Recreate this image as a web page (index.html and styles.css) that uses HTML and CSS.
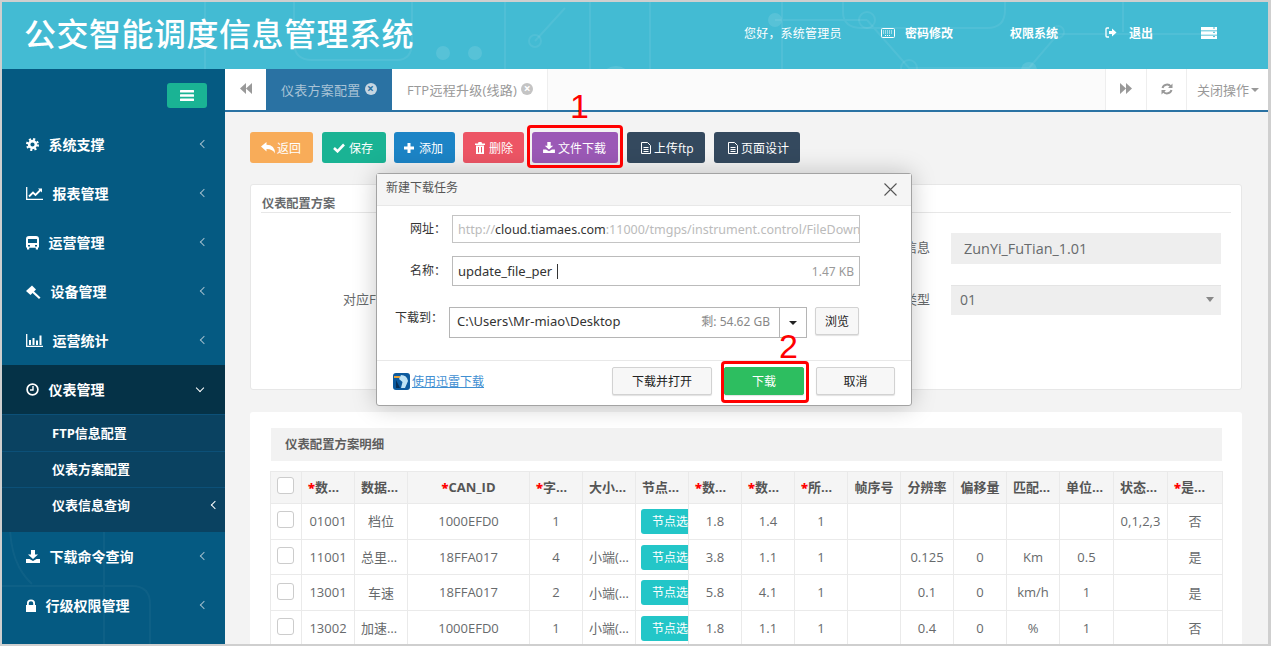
FILE: index.html
```html
<!DOCTYPE html>
<html lang="zh-CN">
<head>
    <meta charset="UTF-8" />
    <meta name="viewport" content="width=device-width, initial-scale=1.0" />
    <title>公交智能调度信息管理系统</title>
    <link rel="stylesheet" href="styles.css">
</head>
<body>
<div class="frame">
    <div class="header">
        <svg class="header-bg" width="1266" height="67" viewBox="0 0 1266 67" fill="none" stroke="#fff" stroke-opacity="0.07" stroke-width="2">
            <path d="M203 0V67M292 0V40Q292 58 310 58H395Q410 58 410 40V0M503 0V67M588 0V67M533 39L563 6M648 0V67M780 0V67M1121 0V30M773 18L865 18M841 0V10Q841 26 860 26H985Q1003 26 1003 8V0M865 18L907 66H1027L1056 32H1210"/>
            <circle cx="533" cy="39" r="6"/><circle cx="865" cy="18" r="8"/><circle cx="907" cy="66" r="8"/><circle cx="1056" cy="30" r="6"/>
            <g fill="#fff" fill-opacity="0.11" stroke="none">
                <circle cx="441" cy="51" r="7"/><circle cx="473" cy="51" r="7"/><circle cx="773" cy="18" r="7"/><circle cx="1027" cy="68" r="8"/><circle cx="614" cy="80" r="16"/>
            </g>
        </svg>
        <div class="logo">公交智能调度信息管理系统</div>
        <div class="header-links">
            <span class="hello">您好，系统管理员</span>
            <a class="hlink hlink-pwd"><svg width="14" height="10" viewBox="0 0 14 10" fill="none" stroke="#fff"><rect x="0.5" y="0.5" width="13" height="9" rx="1"/><path d="M2 3h10M2 5h10M4 7.5h6" stroke-dasharray="1 1"/></svg>密码修改</a>
            <a class="hlink hlink-auth">权限系统</a>
            <a class="hlink hlink-out"><svg width="12" height="11" viewBox="0 0 12 11" fill="#fff"><path d="M4 1H2Q1 1 1 2V9Q1 10 2 10H4" fill="none" stroke="#fff" stroke-width="1.3"/><path d="M4 4H7V1.5L11.5 5.5L7 9.5V7H4Z"/></svg>退出</a>
            <a class="hlink hlink-menu"><svg width="16" height="12" viewBox="0 0 16 12" fill="#fff"><rect width="16" height="3.4"/><rect y="4.3" width="16" height="3.4"/><rect y="8.6" width="16" height="3.4"/><path d="M12 1h2M12 5.3h2M12 9.6h2" stroke="#43bbd3"/></svg></a>
        </div>
    </div>

    <div class="body-wrap">
        <div class="sidebar">
            <svg class="side-bg" width="223" height="120" viewBox="0 0 223 120" fill="none" stroke="#fff" stroke-opacity="0.04" stroke-width="2">
                <path d="M0 62H130Q148 62 148 80V120M102 0V120M8 0Q8 40 30 60"/>
            </svg>
            <div class="toggle-row">
                <button class="toggle"><svg width="14" height="11" viewBox="0 0 14 11" fill="#fff"><rect width="14" height="2.4" rx="0.5"/><rect y="4.3" width="14" height="2.4" rx="0.5"/><rect y="8.6" width="14" height="2.4" rx="0.5"/></svg></button>
            </div>
            <div class="nav-item">
                <svg width="13" height="13" viewBox="0 0 13 13" fill="none" stroke="#fff"><circle cx="6.5" cy="6.5" r="3.4" stroke-width="2.6"/><circle cx="6.5" cy="6.5" r="5.4" stroke-width="2.2" stroke-dasharray="2.1 2.14"/></svg>
                <span>系统支撑</span><i class="chev"></i>
            </div>
            <div class="nav-item">
                <svg width="17" height="13" viewBox="0 0 17 13" fill="none" stroke="#fff"><path d="M0.7 0V12.3H17" stroke-width="1.3"/><path d="M3 9.5L7 5.5L9.5 8L14.5 3" stroke-width="1.8"/><path d="M12 1.5H16V5.5Z" fill="#fff" stroke="none"/></svg>
                <span>报表管理</span><i class="chev"></i>
            </div>
            <div class="nav-item">
                <svg width="13" height="14" viewBox="0 0 13 14" fill="#fff"><path d="M3 0H10Q13 0 13 3V11.5H12V13.5H9.8V11.7H3.2V13.5H1V11.5H0V3Q0 0 3 0ZM2 3V7H11V3ZM2 9V10.5H4V9ZM9 9V10.5H11V9Z" fill-rule="evenodd"/></svg>
                <span>运营管理</span><i class="chev"></i>
            </div>
            <div class="nav-item">
                <svg width="15" height="14" viewBox="0 0 15 14" fill="#fff"><path d="M0 6L6 0.5L10 4.500L4.500 10Z"/><path d="M7.500 6L14.500 12.500L13 14L6 7.500Z"/></svg>
                <span>设备管理</span><i class="chev"></i>
            </div>
            <div class="nav-item">
                <svg width="17" height="13" viewBox="0 0 17 13" fill="#fff"><path d="M0.7 0V12.3H17" fill="none" stroke="#fff" stroke-width="1.3"/><rect x="3" y="6" width="2" height="5"/><rect x="6.5" y="4" width="2" height="7"/><rect x="10" y="6.5" width="2" height="4.5"/><rect x="13.5" y="1.5" width="2" height="9.5"/></svg>
                <span>运营统计</span><i class="chev"></i>
            </div>
            <div class="nav-item nav-active">
                <svg width="13" height="13" viewBox="0 0 13 13" fill="none" stroke="#fff"><circle cx="6.5" cy="6.5" r="5.4" stroke-width="1.7"/><path d="M7 3V7H4" stroke-width="1.4"/></svg>
                <span>仪表管理</span><i class="chev chev-down"></i>
            </div>
            <div class="sub-nav">
                <div class="sub-item sub-first">FTP信息配置</div>
                <div class="sub-item">仪表方案配置</div>
                <div class="sub-item">仪表信息查询<i class="chev chev-white"></i></div>
            </div>
            <div class="nav-item">
                <svg width="14" height="13" viewBox="0 0 14 13" fill="#fff"><path d="M5 0H9V4.5H12L7 9L2 4.5H5Z"/><path d="M0 9H3.5L7 11L10.500 9H14V13H0Z"/></svg>
                <span>下载命令查询</span><i class="chev"></i>
            </div>
            <div class="nav-item">
                <svg width="10" height="13" viewBox="0 0 10 13" fill="#fff"><path d="M0 6H1V4Q1 0.500 5 0.500Q9 0.500 9 4V6H10V13H0ZM2.800 6H7.200V4Q7.200 2.200 5 2.200Q2.800 2.200 2.800 4Z" fill-rule="evenodd"/></svg>
                <span>行级权限管理</span><i class="chev"></i>
            </div>
        </div>

        <div class="main">
            <div class="tabs">
                <div class="tab-btn tab-btn-left"><svg width="12" height="11" viewBox="0 0 12 11" fill="#999"><path d="M6 0V11L0 5.500ZM12 0V11L6 5.500Z"/></svg></div>
                <div class="tab tab-active">仪表方案配置<i class="tab-x">×</i></div>
                <div class="tab">FTP远程升级(线路)<i class="tab-x tab-x-gray">×</i></div>
                <div class="tab-fill"></div>
                <div class="tab-btn tab-btn-next"><svg width="12" height="11" viewBox="0 0 12 11" fill="#999"><path d="M0 0L6 5.500L0 11ZM6 0L12 5.500L6 11Z"/></svg></div>
                <div class="tab-btn"><svg width="12" height="12" viewBox="0 0 12 12" fill="none" stroke="#999" stroke-width="2"><path d="M1.500 5A4.700 4.700 0 0 1 9.800 3.500M10.500 7A4.700 4.700 0 0 1 2.200 8.500"/><path d="M11.500 0.500V5H7ZM0.500 11.500V7H5Z" fill="#999" stroke="none"/></svg></div>
                <div class="tab-close">关闭操作<i class="caret"></i></div>
            </div>

            <div class="content">
                <div class="toolbar">
                    <button class="btn btn-orange"><svg width="14" height="12" viewBox="0 0 14 12" fill="#fff"><path d="M0 4.500L5.500 0V2.800Q14 3 14 11.500Q12 7 5.500 7V9.500Z"/></svg>返回</button>
                    <button class="btn btn-green"><svg width="12" height="10" viewBox="0 0 12 10" fill="none" stroke="#fff" stroke-width="2.600"><path d="M1 5L4.500 8.300L11 1.500"/></svg>保存</button>
                    <button class="btn btn-blue"><svg width="10" height="10" viewBox="0 0 10 10" fill="#fff"><path d="M3.500 0H6.500V3.500H10V6.500H6.500V10H3.500V6.500H0V3.500H3.500Z"/></svg>添加</button>
                    <button class="btn btn-red"><svg width="10" height="12" viewBox="0 0 10 12" fill="#fff"><path d="M3.500 0H6.500L7 1.500H10V3H0V1.500H3ZM1 3.500H9V12H1ZM3 5V10.500H4V5ZM6 5V10.500H7V5Z" fill-rule="evenodd"/></svg>删除</button>
                    <button class="btn btn-purple"><svg width="12" height="11" viewBox="0 0 14 13" fill="#fff"><path d="M5 0H9V4.500H12L7 9L2 4.500H5Z"/><path d="M0 9H3.500L7 11L10.500 9H14V13H0Z"/></svg>文件下载</button>
                    <button class="btn btn-dark btn-ftp"><svg width="10" height="12" viewBox="0 0 10 12" fill="none" stroke="#fff"><path d="M0.500 0.500H6.500L9.500 3.500V11.500H0.500Z"/><path d="M2.500 5.500H7.500M2.500 7.500H7.500M2.500 9.500H7.500"/></svg>上传ftp</button>
                    <button class="btn btn-dark btn-page"><svg width="10" height="12" viewBox="0 0 10 12" fill="none" stroke="#fff"><path d="M0.500 0.500H6.500L9.500 3.500V11.500H0.500Z"/><path d="M2.500 5.500H7.500M2.500 7.500H7.500M2.500 9.500H7.500"/></svg>页面设计</button>
                </div>

                <div class="card form-card">
                    <div class="card-title">仪表配置方案</div>
                    <div class="form-row form-row-first">
                        <label class="f-label">版本信息</label>
                        <div class="f-input">ZunYi_FuTian_1.01</div>
                    </div>
                    <div class="form-row">
                        <label class="f-label f-label-left">对应FTP版本</label>
                        <label class="f-label">设备类型</label>
                        <div class="f-select">01<i class="caret"></i></div>
                    </div>
                </div>

                <div class="card table-card">
                    <div class="table-title">仪表配置方案明细</div>
                    <table class="grid">
                        <colgroup>
                            <col class="c-check"><col class="c-n"><col class="c-n"><col class="c-can"><col class="c-n"><col class="c-n"><col class="c-n"><col class="c-n"><col class="c-n"><col class="c-n"><col class="c-n"><col class="c-n"><col class="c-n"><col class="c-n"><col class="c-w"><col class="c-w"><col class="c-last">
                        </colgroup>
                        <thead>
                            <tr>
                                <th><span class="check"></span></th>
                                <th class="cut"><b>*</b>数…</th>
                                <th class="cut">数据…</th>
                                <th><b>*</b>CAN_ID</th>
                                <th class="cut"><b>*</b>字…</th>
                                <th class="cut">大小…</th>
                                <th class="cut">节点…</th>
                                <th class="cut"><b>*</b>数…</th>
                                <th class="cut"><b>*</b>数…</th>
                                <th class="cut"><b>*</b>所…</th>
                                <th>帧序号</th>
                                <th>分辨率</th>
                                <th>偏移量</th>
                                <th class="cut">匹配…</th>
                                <th class="cut">单位…</th>
                                <th class="cut">状态…</th>
                                <th class="cut"><b>*</b>是…</th>
                            </tr>
                        </thead>
                        <tbody>
                            <tr>
                                <td><span class="check"></span></td><td>01001</td><td>档位</td><td>1000EFD0</td><td>1</td><td></td>
                                <td class="td-node"><span class="node-btn">节点选择</span></td>
                                <td>1.8</td><td>1.4</td><td>1</td><td></td><td></td><td></td><td></td><td></td><td>0,1,2,3</td><td>否</td>
                            </tr>
                            <tr>
                                <td><span class="check"></span></td><td>11001</td><td class="cut">总里…</td><td>18FFA017</td><td>4</td><td class="cut">小端(…</td>
                                <td class="td-node"><span class="node-btn">节点选择</span></td>
                                <td>3.8</td><td>1.1</td><td>1</td><td></td><td>0.125</td><td>0</td><td>Km</td><td>0.5</td><td></td><td>是</td>
                            </tr>
                            <tr>
                                <td><span class="check"></span></td><td>13001</td><td>车速</td><td>18FFA017</td><td>2</td><td class="cut">小端(…</td>
                                <td class="td-node"><span class="node-btn">节点选择</span></td>
                                <td>5.8</td><td>4.1</td><td>1</td><td></td><td>0.1</td><td>0</td><td>km/h</td><td>1</td><td></td><td>是</td>
                            </tr>
                            <tr>
                                <td><span class="check"></span></td><td>13002</td><td class="cut">加速…</td><td>1000EFD0</td><td>1</td><td class="cut">小端(…</td>
                                <td class="td-node"><span class="node-btn">节点选择</span></td>
                                <td>1.8</td><td>1.1</td><td>1</td><td></td><td>0.4</td><td>0</td><td>%</td><td>1</td><td></td><td>否</td>
                            </tr>
                        </tbody>
                    </table>
                </div>
            </div>
        </div>
    </div>

    <!-- 下载弹窗 -->
    <div class="dialog">
        <div class="dlg-head">新建下载任务
            <svg class="dlg-x" width="13" height="13" viewBox="0 0 13 13" stroke="#555" stroke-width="1.100"><path d="M0.500 0.500L12.500 12.500M12.500 0.500L0.500 12.500"/></svg>
        </div>
        <div class="dlg-body">
            <div class="dlg-row dlg-row-url">
                <label>网址：</label>
                <div class="dlg-input dlg-url"><span class="gray">http://</span>cloud.tiamaes.com<span class="gray">:11000/tmgps/instrument.control/FileDown</span></div>
            </div>
            <div class="dlg-row dlg-row-name">
                <label>名称：</label>
                <div class="dlg-input dlg-name"><span>update_file_per</span><i class="cursor"></i><em>1.47 KB</em></div>
            </div>
            <div class="dlg-row dlg-row-path">
                <label>下载到：</label>
                <div class="dlg-path"><span>C:\Users\Mr-miao\Desktop</span><em>剩: 54.62 GB</em></div>
                <div class="dlg-drop"><i class="caret caret-dark"></i></div>
                <button class="dlg-btn dlg-browse">浏览</button>
            </div>
        </div>
        <div class="dlg-foot">
            <svg width="17" height="17" viewBox="0 0 17 17"><rect width="17" height="17" rx="3" fill="#0c5a9e"/><path d="M1 3H7V5H1Z" fill="#e8a33a"/><path d="M8 2Q14 2 15 8L12 15H8L9.500 9L6 6Z" fill="#bfe3f5"/><path d="M3 7L7 15H3Z" fill="#06305a"/></svg>
            <a class="xl-link">使用迅雷下载</a>
            <div class="dlg-foot-btns">
                <button class="dlg-btn dlg-open">下载并打开</button>
                <button class="dlg-btn dlg-go">下载</button>
                <button class="dlg-btn dlg-cancel">取消</button>
            </div>
        </div>
    </div>

    <!-- 红框标注 -->
    <div class="mark mark-1"></div>
    <div class="mark mark-2"></div>
    <div class="mark-num mark-num-1">1</div>
    <div class="mark-num mark-num-2">2</div>
</div>
</body>
</html>
```

FILE: styles.css
```css
* {
    box-sizing: border-box;
}
html, body {
    margin: 0;
    height: 646px;
    overflow: hidden;
}
body {
    font-family: "Open Sans", "Noto Sans CJK SC", sans-serif;
    font-size: 14px;
    color: #676a6c;
    background: #ccc;
}
i, em {
    font-style: normal;
}
button {
    font-family: inherit;
}
.frame {
    position: relative;
    width: 1271px;
    height: 646px;
    border-style: solid;
    border-color: #cfcfcf;
    border-width: 2px 3px 2px 2px;
    overflow: hidden;
    display: flex;
    flex-direction: column;
    background: #f3f3f3;
}

/* header */
.header {
    position: relative;
    flex: 0 0 67px;
    background: #43bbd3;
    color: #fff;
    display: flex;
    align-items: center;
    justify-content: space-between;
    overflow: hidden;
}
.header-bg {
    position: absolute;
    left: 0;
    top: 0;
}
.logo {
    position: relative;
    margin: 0 0 4px 22px;
    font-size: 32px;
    letter-spacing: 0.5px;
    font-weight: 500;
    line-height: 44px;
}
.header-links {
    position: relative;
    display: flex;
    align-items: center;
    font-size: 12px;
    margin-bottom: 6px;
    padding-right: 51px;
}
.hello {
    width: 137px;
    margin-left: -1px;
    letter-spacing: 0.2px;
}
.hlink {
    display: flex;
    align-items: center;
    gap: 10px;
    font-weight: 700;
}
.hlink-pwd {
    width: 129px;
}
.hlink-auth {
    width: 95px;
}
.hlink-out {
    width: 96px;
    gap: 12px;
}

/* layout */
.body-wrap {
    flex: 1;
    display: flex;
    min-height: 0;
}
.sidebar {
    position: relative;
    flex: 0 0 223px;
    background: #055a82;
    color: #fff;
}
.side-bg {
    position: absolute;
    left: 0;
    bottom: 0;
}
.toggle-row {
    height: 51px;
    padding: 14px 18px 0 0;
    display: flex;
    justify-content: flex-end;
    align-items: flex-start;
}
.toggle {
    width: 40px;
    height: 25px;
    padding: 0;
    border: 0;
    border-radius: 3px;
    background: #1ab394;
    display: flex;
    align-items: center;
    justify-content: center;
}
.nav-item {
    position: relative;
    height: 49px;
    padding: 0 18px 0 24px;
    display: flex;
    align-items: center;
    gap: 9.500px;
    font-size: 14px;
    font-weight: 700;
}
.nav-item span {
    flex: 1;
    padding-bottom: 1px;
}
.chev {
    width: 6px;
    height: 6px;
    border-left: 1px solid #9fbccb;
    border-bottom: 1px solid #9fbccb;
    transform: rotate(45deg);
    margin: 0 0 2px 0;
}
.chev-down {
    width: 6px;
    height: 6px;
    border-color: #fff;
    transform: rotate(-45deg);
    margin: 0 4px 4px 0;
}
.chev-white {
    border-color: #fff;
    margin: 0 7px 0 0;
}
.nav-active {
    background: #053247;
}
.sub-nav {
    position: relative;
    height: 118px;
    background: #0a4261;
    font-size: 13px;
    font-weight: 700;
}
.sub-item {
    height: 36px;
    padding: 0 0 2px 50px;
    display: flex;
    align-items: center;
    justify-content: space-between;
    border-top: 1px solid #0c5078;
}
.sub-first {
    height: 37px;
}

/* tabs */
.main {
    flex: 1;
    min-width: 0;
    display: flex;
    flex-direction: column;
}
.tabs {
    flex: 0 0 43px;
    display: flex;
    background: #fbfbfb;
    border-bottom: 2px solid #2a72a3;
    color: #999;
    font-size: 13px;
}
.tab-btn {
    width: 40px;
    display: flex;
    align-items: center;
    justify-content: center;
    background: #fff;
    border-left: 1px solid #eee;
    padding-bottom: 2px;
}
.tab-btn-left {
    width: 41px;
    border-left: 0;
}
.tab-btn-next {
    width: 41px;
}
.tab {
    padding: 0 0 1px 15px;
    display: flex;
    align-items: center;
    gap: 4px;
    border-right: 1px solid #eee;
    background: #fff;
    letter-spacing: 0.25px;
    white-space: nowrap;
}
.tab-active {
    width: 126px;
    background: #2a72a3;
    color: #a9c3d6;
    border-right: 0;
}
.tab + .tab {
    width: 156px;
}
.tab-x {
    width: 12px;
    height: 12px;
    border-radius: 50%;
    background: #c5d6e2;
    color: #2a72a3;
    font-size: 12px;
    line-height: 11px;
    text-align: center;
    font-weight: 700;
    letter-spacing: 0;
}
.tab-x-gray {
    background: #c4c4c4;
    color: #fff;
}
.tab-fill {
    flex: 1;
}
.tab-close {
    width: 82px;
    padding: 0 0 0 10px;
    background: #fff;
    border-left: 1px solid #eee;
    display: flex;
    align-items: center;
    gap: 2px;
    white-space: nowrap;
}
.caret {
    display: inline-block;
    border-left: 4px solid transparent;
    border-right: 4px solid transparent;
    border-top: 4px solid #999;
}

/* content */
.content {
    flex: 1;
    min-height: 0;
    padding: 20px 26px 0 25px;
}
.toolbar {
    display: flex;
    gap: 8px;
    height: 31px;
    margin-bottom: 21px;
}
.btn {
    height: 31px;
    padding: 0 0 0 11px;
    border: 0;
    border-radius: 3px;
    color: #fff;
    font-size: 12px;
    display: flex;
    align-items: center;
    gap: 3px;
    white-space: nowrap;
}
.btn-orange { width: 63px; background: #f8ac59; gap: 2px; }
.btn-green { width: 64px; margin-left: 1px; background: #1ab394; gap: 4px; }
.btn-blue { width: 61px; background: #1c84c6; padding-left: 10px; gap: 5px; }
.btn-red { width: 61px; background: #ed5565; padding-left: 12px; gap: 4px; }
.btn-purple { width: 86px; background: #9b59b6; }
.btn-dark { margin-left: 1px; padding-left: 14px; background: #34495e; }
.btn-ftp { width: 78px; }
.btn-page { width: 86px; }
.card {
    background: #fff;
    border: 1px solid #e7e7e7;
    border-radius: 3px;
}
.form-card {
    height: 206px;
    padding: 0 10px;
}
.card-title {
    height: 28px;
    padding: 10px 0 0 1px;
    border-bottom: 1px solid #e7e7e7;
    font-size: 12.200px;
    font-weight: 700;
    line-height: 17px;
}
.form-row {
    display: flex;
    align-items: center;
    justify-content: flex-end;
    gap: 21px;
    margin-right: 10px;
    font-size: 13px;
}
.form-row-first {
    margin-top: 20px;
    margin-bottom: 21px;
}
.f-label {
    white-space: nowrap;
    padding-bottom: 4px;
}
.f-label-left {
    margin-right: auto;
    margin-left: 82px;
}
.f-input,
.f-select {
    width: 270px;
    height: 31px;
    background: #eee;
    display: flex;
    align-items: center;
}
.f-input {
    padding-left: 13px;
    font-size: 14.400px;
}
.f-select {
    height: 30px;
    padding: 0 7px 3px 9px;
    justify-content: space-between;
    border-top: 1px solid #e4e4e4;
    font-size: 14px;
}
.f-select .caret {
    border-width: 5px 4px 0 4px;
    border-top-color: #888;
}
.table-card {
    height: 300px;
    margin-top: 22px;
    padding: 16px 20px 0 21px;
    border: 0;
}
.table-title {
    height: 33px;
    padding-left: 14px;
    background: #f2f2f2;
    font-size: 12.400px;
    font-weight: 700;
    line-height: 33px;
    color: #5e5e5e;
}
.grid {
    width: 952px;
    margin: 10px 0 0 -1px;
    border-collapse: collapse;
    table-layout: fixed;
}
.c-check { width: 31px; }
.c-n { width: 53px; }
.c-can { width: 122px; }
.c-w { width: 54px; }
.c-last { width: 55px; }
.grid th,
.grid td {
    border: 1px solid #eaeaea;
    padding: 0 4px 1px;
    text-align: center;
    white-space: nowrap;
    overflow: hidden;
    font-size: 13px;
}
.grid th {
    height: 32px;
    padding-bottom: 2px;
    background: #f5f5f5;
    color: #555;
}
.grid th b {
    color: #f00;
}
.grid td {
    height: 35.700px;
}
.grid .cut {
    text-align: left;
    padding-left: 6px;
}
.grid .td-node {
    padding: 0 0 0 5px;
    text-align: left;
}
.node-btn {
    display: block;
    width: 70px;
    height: 25px;
    padding-left: 11px;
    border-radius: 3px;
    background: #23c6c8;
    color: #fff;
    font-size: 12px;
    line-height: 25px;
}
.check {
    display: block;
    width: 17px;
    height: 17px;
    margin: -2px 0 0 2px;
    border: 1px solid #ccc;
    border-radius: 3px;
    background: #fff;
}

/* dialog */
.dialog {
    position: absolute;
    left: 374px;
    top: 171px;
    width: 536px;
    height: 233px;
    background: #fff;
    border: 1px solid #a3a3a3;
    border-radius: 3px;
    box-shadow: 0 0 24px rgba(0, 0, 0, 0.22);
    color: #333;
    font-family: "Noto Sans", "Noto Sans CJK SC", sans-serif;
    font-size: 12px;
}
.dlg-head {
    position: relative;
    height: 32px;
    padding-left: 9px;
    background: #f5f5f5;
    border-bottom: 1px solid #e8e8e8;
    color: #555;
    line-height: 27px;
}
.dlg-x {
    position: absolute;
    right: 14px;
    top: 9px;
}
.dlg-body {
    height: 155px;
    border-bottom: 1px solid #e8e8e8;
}
.dlg-row {
    display: flex;
    align-items: center;
}
.dlg-row label {
    white-space: nowrap;
    padding-bottom: 2px;
}
.dlg-row-url {
    padding: 9px 0 0 33px;
}
.dlg-row-name {
    padding: 13px 0 0 33px;
}
.dlg-row-path {
    padding: 21px 0 0 18px;
    align-items: flex-start;
}
.dlg-row-path label {
    margin-top: 1px;
}
.dlg-input {
    width: 408px;
    margin-left: 6px;
    border: 1px solid #c4c4c4;
    padding-left: 5px;
    font-size: 13px;
    background: #fff;
    white-space: nowrap;
    overflow: hidden;
    display: flex;
    align-items: center;
}
.dlg-url {
    height: 28px;
    font-size: 12.500px;
}
.gray {
    color: #bbb;
}
.dlg-name {
    height: 30px;
    position: relative;
    border-color: #bbb;
}
.dlg-name em {
    margin-left: auto;
    padding-right: 5px;
    color: #999;
    font-size: 12px;
}
.cursor {
    width: 1px;
    height: 15px;
    margin-left: 5px;
    background: #333;
}
.dlg-path {
    width: 331px;
    height: 31px;
    margin-left: 6px;
    padding: 0 9px 3px 7px;
    border: 1px solid #b5b5b5;
    display: flex;
    align-items: center;
    justify-content: space-between;
    font-size: 13px;
}
.dlg-path em {
    color: #888;
    font-size: 12px;
}
.dlg-drop {
    width: 27px;
    height: 31px;
    border: 1px solid #b5b5b5;
    border-left: 0;
    display: flex;
    align-items: center;
    justify-content: center;
}
.caret-dark {
    border-top-color: #222;
}
.dlg-btn {
    height: 28px;
    padding: 0;
    border: 1px solid #d2d2d2;
    border-radius: 2px;
    background: #f7f7f7;
    color: #222;
    font-size: 12px;
    box-shadow: 0 1px 1px rgba(0, 0, 0, 0.12);
}
.dlg-browse {
    width: 44px;
    margin-left: 8px;
}
.dlg-foot {
    height: 44px;
    padding: 0 16px 4px 16px;
    display: flex;
    align-items: center;
}
.xl-link {
    margin-left: 2px;
    color: #3f8fd2;
    text-decoration: underline;
}
.dlg-foot-btns {
    margin-left: auto;
    display: flex;
    gap: 12px;
}
.dlg-open {
    width: 100px;
}
.dlg-go {
    width: 80px;
    border-color: #2dbe60;
    background: #2dbe60;
    color: #fff;
}
.dlg-cancel {
    width: 79px;
}

/* annotations */
.mark {
    position: absolute;
    border: 3px solid #f00;
    border-radius: 4px;
}
.mark-1 {
    left: 525px;
    top: 123px;
    width: 96px;
    height: 43px;
}
.mark-2 {
    left: 719px;
    top: 359px;
    width: 88px;
    height: 42px;
}
.mark-num {
    position: absolute;
    color: #f00;
    font-family: "Liberation Sans", sans-serif;
    font-size: 34px;
    line-height: 34px;
}
.mark-num-1 {
    left: 568px;
    top: 87px;
}
.mark-num-2 {
    left: 777px;
    top: 327px;
}
```
